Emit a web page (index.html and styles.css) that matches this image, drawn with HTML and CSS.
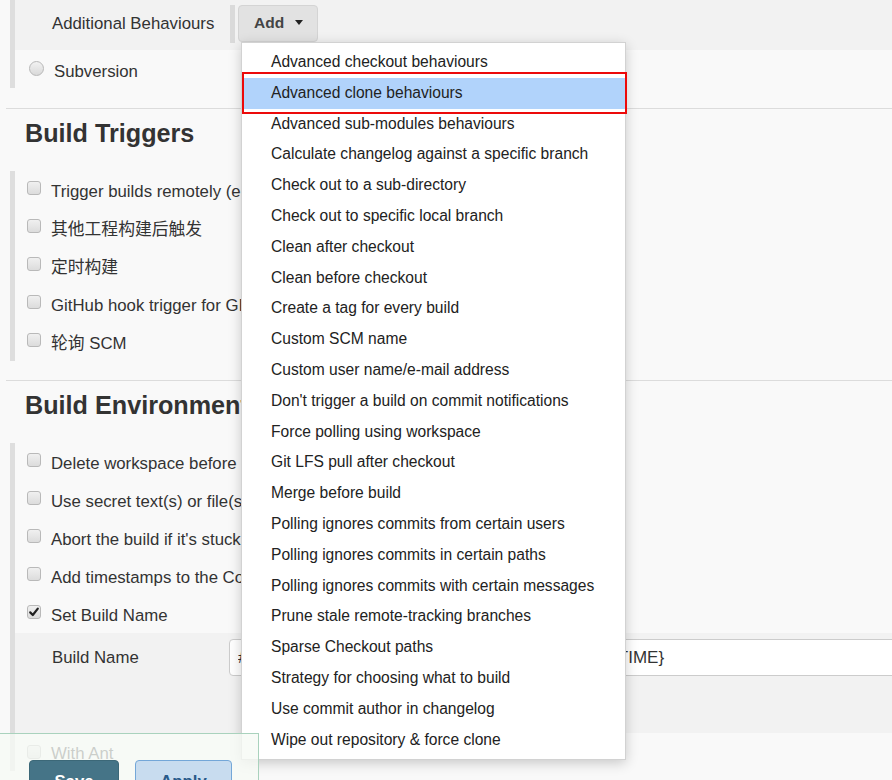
FILE: index.html
```html
<!DOCTYPE html>
<html lang="en">
<head>
<meta charset="utf-8">
<title>Jenkins configure</title>
<link rel="stylesheet" href="styles.css">
</head>
<body>
<div class="page">
  <div class="group">
    <div class="band">
      <span class="band-label">Additional Behaviours</span>
      <span class="band-bar"></span>
      <button class="add-btn" type="button">Add<span class="caret"></span></button>
    </div>
    <div class="row">
      <span class="radio"></span>
      <span class="label radio-label">Subversion</span>
    </div>
  </div>

  <div class="rule"></div>
  <h2 class="title">Build Triggers</h2>
  <div class="group">
    <div class="row"><span class="cb"></span><span class="label">Trigger builds remotely (e.g., from scripts)</span></div>
    <div class="row"><span class="cb"></span><span class="label">其他工程构建后触发</span></div>
    <div class="row"><span class="cb"></span><span class="label">定时构建</span></div>
    <div class="row"><span class="cb"></span><span class="label">GitHub hook trigger for GITScm polling</span></div>
    <div class="row"><span class="cb"></span><span class="label">轮询 SCM</span></div>
  </div>

  <div class="rule rule-2"></div>
  <h2 class="title">Build Environment</h2>
  <div class="group">
    <div class="row"><span class="cb"></span><span class="label">Delete workspace before build starts</span></div>
    <div class="row"><span class="cb"></span><span class="label">Use secret text(s) or file(s)</span></div>
    <div class="row"><span class="cb"></span><span class="label">Abort the build if it's stuck</span></div>
    <div class="row"><span class="cb"></span><span class="label">Add timestamps to the Console Output</span></div>
    <div class="row"><span class="cb checked"><svg viewBox="0 0 14 14" width="14" height="14"><path d="M3.2 7.4 L5.8 10 L10.8 3.6" fill="none" stroke="#222" stroke-width="2.2" stroke-linecap="round" stroke-linejoin="round"/></svg></span><span class="label">Set Build Name</span></div>
    <div class="nested">
      <div class="field">
        <span class="field-label">Build Name</span>
        <input class="text-input" type="text" readonly value="#${BUILD_NUMBER}-${GIT_BRANCH}-${BUILD_TIME}">
      </div>
    </div>
    <div class="row row-ant"><span class="cb"></span><span class="label">With Ant</span></div>
  </div>

  <ul class="menu">
    <li class="item">Advanced checkout behaviours</li>
    <li class="item active">Advanced clone behaviours</li>
    <li class="item">Advanced sub-modules behaviours</li>
    <li class="item">Calculate changelog against a specific branch</li>
    <li class="item">Check out to a sub-directory</li>
    <li class="item">Check out to specific local branch</li>
    <li class="item">Clean after checkout</li>
    <li class="item">Clean before checkout</li>
    <li class="item">Create a tag for every build</li>
    <li class="item">Custom SCM name</li>
    <li class="item">Custom user name/e-mail address</li>
    <li class="item">Don't trigger a build on commit notifications</li>
    <li class="item">Force polling using workspace</li>
    <li class="item">Git LFS pull after checkout</li>
    <li class="item">Merge before build</li>
    <li class="item">Polling ignores commits from certain users</li>
    <li class="item">Polling ignores commits in certain paths</li>
    <li class="item">Polling ignores commits with certain messages</li>
    <li class="item">Prune stale remote-tracking branches</li>
    <li class="item">Sparse Checkout paths</li>
    <li class="item">Strategy for choosing what to build</li>
    <li class="item">Use commit author in changelog</li>
    <li class="item">Wipe out repository &amp; force clone</li>
  </ul>
  <div class="annotation"></div>

  <div class="sticker">
    <button class="btn btn-save" type="button">Save</button>
    <button class="btn btn-apply" type="button">Apply</button>
  </div>
</div>
</body>
</html>
```

FILE: styles.css
```css
html, body {
  margin: 0;
  padding: 0;
  height: 780px;
  overflow: hidden;
}
body {
  background: #f9f9f9;
  font-family: "Liberation Sans", Arial, "Noto Sans CJK SC", sans-serif;
  font-size: 16.8px;
  color: #333;
}
.page {
  position: relative;
  height: 780px;
}
.group {
  margin-left: 10px;
  border-left: 5px solid #dedede;
}
.band {
  display: flex;
  align-items: flex-start;
  height: 50px;
  background: #f2f2f2;
}
.band-label {
  flex: 0 0 215px;
  box-sizing: border-box;
  padding-left: 37px;
  margin-top: 14px;
  line-height: 20px;
  white-space: nowrap;
}
.band-bar {
  width: 5px;
  height: 38px;
  margin-top: 5px;
  background: #dadada;
}
.add-btn {
  margin: 5px 0 0 3px;
  height: 37px;
  box-sizing: border-box;
  padding: 0 14px 2px 15px;
  display: flex;
  align-items: center;
  background: #e2e2e2;
  border: 1px solid #d4d4d4;
  border-radius: 4px;
  font-family: "Liberation Sans", Arial, sans-serif;
  font-weight: bold;
  font-size: 15.5px;
  color: #444;
}
.caret {
  margin-left: 11px;
  width: 0;
  height: 0;
  border-left: 4.5px solid transparent;
  border-right: 4.5px solid transparent;
  border-top: 5px solid #222;
}
.row {
  display: flex;
  align-items: flex-start;
  height: 38px;
  padding-left: 12px;
}
.label {
  margin-top: 11px;
  margin-left: 10px;
  line-height: 20px;
  white-space: nowrap;
}
.radio {
  margin-top: 11px;
  margin-left: 2px;
  width: 15px;
  height: 15px;
  box-sizing: border-box;
  border-radius: 50%;
  border: 1px solid #b8b8b8;
  background: linear-gradient(#f2f2f2, #d9d9d9);
}
.radio-label {
  margin-top: 12px;
  margin-left: 10px;
}
.cb {
  margin-top: 10px;
  width: 14px;
  height: 14px;
  box-sizing: border-box;
  border: 1px solid #b9b9b9;
  border-radius: 3px;
  background: linear-gradient(#f0f0f0, #dcdcdc);
  display: flex;
  align-items: center;
  justify-content: center;
  overflow: hidden;
}
.cb svg {
  display: block;
  flex: 0 0 auto;
}
.rule {
  margin: 20px 0 0 6px;
  border-top: 1px solid #dcdcdc;
}
.rule-2 {
  margin-top: 19px;
}
.title {
  margin: 9px 0 23px;
  padding-left: 25px;
  font-size: 25.2px;
  line-height: 30px;
  font-weight: bold;
  color: #333;
  white-space: nowrap;
}
.nested {
  height: 100px;
  box-sizing: border-box;
  padding-top: 6px;
  background: #f2f2f2;
}
.field {
  display: flex;
  align-items: center;
  height: 37px;
}
.field-label {
  flex: 0 0 214px;
  box-sizing: border-box;
  padding-left: 37px;
  white-space: nowrap;
}
.text-input {
  flex: 0 0 700px;
  height: 37px;
  box-sizing: border-box;
  border: 1px solid #cccccc;
  border-radius: 4px;
  background: #fff;
  padding: 0 0 0 8px;
  font-family: "Liberation Sans", Arial, sans-serif;
  font-size: 17px;
  color: #333;
  outline: none;
}
.row-ant .cb {
  margin-top: 12px;
}
.menu {
  position: absolute;
  left: 241px;
  top: 42px;
  width: 385px;
  box-sizing: border-box;
  margin: 0;
  padding: 4px 0;
  list-style: none;
  background: #fff;
  border: 1px solid #d2d2d2;
  box-shadow: 0 3px 12px rgba(0, 0, 0, 0.2);
  font-size: 15.6px;
  color: #222;
}
.item {
  height: 30.8px;
  box-sizing: border-box;
  padding: 2px 0 2px 29px;
  line-height: 26.8px;
  white-space: nowrap;
}
.item.active {
  background: #b1d3fb;
}
.annotation {
  position: absolute;
  left: 242px;
  top: 72px;
  width: 385px;
  height: 42px;
  box-sizing: border-box;
  border: 2px solid #ec0a0a;
}
.sticker {
  position: absolute;
  left: 0;
  top: 733px;
  width: 259px;
  height: 60px;
  box-sizing: border-box;
  border-top: 1px solid #a9d2bd;
  border-right: 1px solid #a9d2bd;
  background: rgba(246, 250, 245, 0.78);
  display: flex;
  align-items: flex-start;
  gap: 16px;
  padding: 26px 0 0 29px;
}
.btn {
  height: 44px;
  border-radius: 4px;
  font-family: "Liberation Sans", Arial, sans-serif;
  font-size: 16.8px;
  font-weight: bold;
  padding: 0;
}
.btn-save {
  width: 90px;
  background: #457487;
  border: 1px solid #3c6878;
  color: #fff;
}
.btn-apply {
  width: 97px;
  background: #c8dcef;
  border: 1px solid #74a7d8;
  color: #2a5a8a;
}
```
